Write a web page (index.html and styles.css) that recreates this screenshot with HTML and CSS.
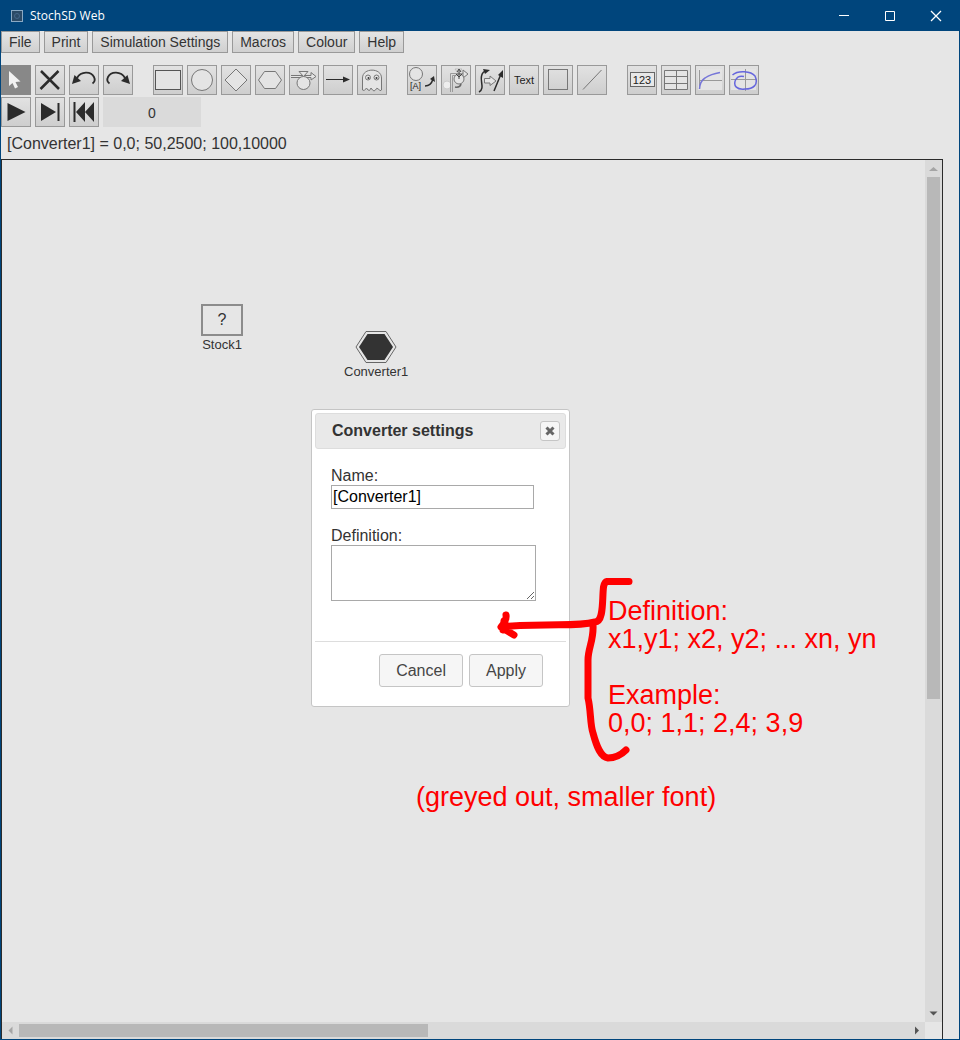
FILE: index.html
```html
<!DOCTYPE html>
<html lang="en">
<head>
<meta charset="utf-8">
<title>StochSD Web</title>
<link rel="stylesheet" href="styles.css">
</head>
<body>
<div class="window">
  <header class="titlebar">
    <svg class="app-icon" viewBox="0 0 12 12"><rect x=".5" y=".5" width="11" height="11" fill="#2b4a66" stroke="#8aa9c4"/><circle cx="6" cy="6" r="2.500" fill="none" stroke="#45678a"/></svg>
    <span class="app-name">StochSD Web</span>
    <div class="window-controls">
      <button class="window-button" aria-label="Minimise"><svg viewBox="0 0 12 12"><path d="M1 5.500H11"/></svg></button>
      <button class="window-button" aria-label="Maximise"><svg viewBox="0 0 12 12"><path d="M1.500 1.500H10.500V10.500H1.500Z"/></svg></button>
      <button class="window-button" aria-label="Close window"><svg viewBox="0 0 12 12"><path d="M1 1L11 11M11 1L1 11" stroke-width="1.300"/></svg></button>
    </div>
  </header>

  <nav class="menu">
    <button class="menu-button">File</button>
    <button class="menu-button">Print</button>
    <button class="menu-button">Simulation Settings</button>
    <button class="menu-button">Macros</button>
    <button class="menu-button">Colour</button>
    <button class="menu-button">Help</button>
  </nav>

  <div class="toolbar">
    <div class="tool-group">
      <button class="tool tool-active" aria-label="Select"><svg viewBox="0 0 28 28"><path d="M7 5V20L10.500 17L13 22.500L16 21L13.500 16L18.500 15.500Z" fill="#f2f2f2"/></svg></button>
      <button class="tool" aria-label="Delete"><svg viewBox="0 0 28 28"><path d="M5 5L23 23M22.500 5L4.500 23" fill="none" stroke="#2b2b2b" stroke-width="2.500"/></svg></button>
      <button class="tool" aria-label="Undo"><svg viewBox="0 0 28 28"><path d="M7 12C11 5 21 5 24 11C25.500 14 24.500 16 22.500 17.500" fill="none" stroke="#2b2b2b" stroke-width="1.800"/><path d="M2 18L4.500 9L11 15Z" fill="#2b2b2b"/></svg></button>
      <button class="tool" aria-label="Redo"><svg viewBox="0 0 28 28"><path d="M21 12C17 5 7 5 4 11C2.500 14 3.500 16 5.500 17.500" fill="none" stroke="#2b2b2b" stroke-width="1.800"/><path d="M26 18L23.500 9L17 15Z" fill="#2b2b2b"/></svg></button>
    </div>
    <div class="tool-group">
      <button class="tool" aria-label="Stock"><svg viewBox="0 0 28 28"><rect x="1.500" y="4.500" width="25" height="19" class="shape shape-dark"/></svg></button>
      <button class="tool" aria-label="Auxiliary"><svg viewBox="0 0 28 28"><circle cx="14" cy="14" r="10.500" class="shape"/></svg></button>
      <button class="tool" aria-label="Parameter"><svg viewBox="0 0 28 28"><path d="M14 3L25 14L14 25L3 14Z" class="shape"/></svg></button>
      <button class="tool" aria-label="Converter"><svg viewBox="0 0 28 28"><path d="M8.500 5.500H19.500L25.500 14L19.500 22.500H8.500L2.500 14Z" class="shape"/></svg></button>
      <button class="tool" aria-label="Flow"><svg viewBox="0 0 28 28"><path d="M1 9.500H21V6.500L26 10.500L21 14V11.500H1" class="shape"/><path d="M9 5.500H18L13.500 10.500Z" class="shape"/><circle cx="13.500" cy="17" r="6.500" class="shape"/></svg></button>
      <button class="tool" aria-label="Link"><svg viewBox="0 0 28 28"><path d="M2 13.500H20" stroke="#2b2b2b"/><path d="M19 10.500L26 13.500L19 16.500Z" fill="#2b2b2b"/></svg></button>
      <button class="tool" aria-label="Ghost"><svg viewBox="0 0 28 28"><path d="M4.500 24V12C4.500 1.500 23.500 1.500 23.500 12V24Q22 26 20.500 23Q18.500 21 17.500 24Q16 26 14.500 24L13 22Q11.500 26 10 24L8.500 22Q6 26 4.500 24Z" class="shape"/><circle cx="10" cy="11.500" r="2.500" class="shape"/><circle cx="18.500" cy="11.500" r="2.500" class="shape"/><circle cx="10.500" cy="12" r="1" fill="#333"/><circle cx="18.500" cy="12" r="1" fill="#333"/></svg></button>
    </div>
    <div class="tool-group">
      <button class="tool" aria-label="Move value"><svg viewBox="0 0 28 28"><circle cx="8" cy="8" r="6.500" class="shape"/><text x="2" y="23" class="tiny-text">[A]</text><path d="M17 20Q23 20 25 13" fill="none" stroke="#2b2b2b" stroke-width="1.500"/><path d="M22 13L26 10L27 16Z" fill="#2b2b2b"/></svg></button>
      <button class="tool" aria-label="Move valve"><svg viewBox="0 0 28 28"><circle cx="5" cy="19" r="4" fill="#eee" stroke="#ccc"/><path d="M8.500 26V7.500H22M10.500 26V9.500H22" fill="none" stroke="#999"/><path d="M21 4L26 8L21 12Z" class="shape"/><path d="M13 3H20L13 12H20Z" fill="#eee" stroke="#bbb"/><circle cx="17" cy="13" r="5" class="shape"/><path d="M17 4V13M15 6L17 3L19 6M14 8L17 11L20 8" fill="none" stroke="#444"/><path d="M19 18Q18 22 13 21" fill="none" stroke="#666" stroke-width="1.500"/></svg></button>
      <button class="tool" aria-label="Straighten link"><svg viewBox="0 0 28 28"><path d="M3 26C9 23 4 15 5.500 10Q6.500 5 11 5" fill="none" stroke="#2b2b2b" stroke-width="1.500"/><path d="M7 3L14 4L9 8Z" fill="#2b2b2b"/><path d="M8.500 12.500H14V10L20 15L14 19.500V17H8.500Z" class="shape"/><path d="M18 25L25 8" stroke="#2b2b2b" stroke-width="1.500"/><path d="M22 9L27 4V12Z" fill="#2b2b2b"/></svg></button>
      <button class="tool tool-text">Text</button>
      <button class="tool" aria-label="Rectangle"><svg viewBox="0 0 28 28"><rect x="4.500" y="3.500" width="19" height="20" fill="none" stroke="#777"/></svg></button>
      <button class="tool" aria-label="Line"><svg viewBox="0 0 28 28"><path d="M5 23.500L23.500 4" stroke="#777"/></svg></button>
    </div>
    <div class="tool-group">
      <button class="tool" aria-label="Number box"><svg viewBox="0 0 28 28"><rect x="2.500" y="6.500" width="24" height="14" fill="#e8e8e8" stroke="#666"/><text x="14" y="18" class="number-text">123</text></svg></button>
      <button class="tool" aria-label="Table"><svg viewBox="0 0 28 28"><path d="M2.500 4.500H25.500V23.500H2.500ZM2.500 10.500H25.500M2.500 17.500H25.500M14.500 4.500V23.500" class="shape"/></svg></button>
      <button class="tool" aria-label="Time plot"><svg viewBox="0 0 28 28"><path d="M2 3H26V24H2Z" fill="#e4e4e4"/><path d="M3.500 4V23M3 14.500H26" stroke="#999" fill="none"/><path d="M3.500 23Q4 15 9 12Q15 8 24 6.500" fill="none" stroke="#7676d8" stroke-width="1.500"/></svg></button>
      <button class="tool" aria-label="XY plot"><svg viewBox="0 0 28 28"><path d="M1 3H26V24H1Z" fill="#e4e4e4"/><path d="M15.500 3V25M1 13.500H27" stroke="#999" fill="none"/><path d="M2.500 9C8 4 21 5 25 10C29 19 23 23 15 23C7 24 3 20 5.500 14Q8 9 14 10.500" fill="none" stroke="#6666dd" stroke-width="1.500"/></svg></button>
    </div>
  </div>

  <div class="playbar">
    <button class="tool" aria-label="Run"><svg viewBox="0 0 28 28"><path d="M5.500 5L23.500 14L5.500 23Z" fill="#2b2b2b"/></svg></button>
    <button class="tool" aria-label="Step"><svg viewBox="0 0 28 28"><path d="M5 5L20 14L5 23Z" fill="#2b2b2b"/><path d="M22.500 5V23" stroke="#2b2b2b" stroke-width="2"/></svg></button>
    <button class="tool" aria-label="Reset"><svg viewBox="0 0 28 28"><path d="M4.500 4V24" stroke="#2b2b2b" stroke-width="2"/><path d="M15 4V24L6 14ZM24 4V24L15 14Z" fill="#2b2b2b"/></svg></button>
    <output class="time-readout">0</output>
  </div>

  <p class="status">[Converter1] = 0,0; 50,2500; 100,10000</p>

  <main class="stage">
    <div class="pane">
      <div class="node node-stock">
        <div class="stock-box">?</div>
        <span class="node-label">Stock1</span>
      </div>
      <div class="node node-converter">
        <svg class="converter-shape" viewBox="0 0 42 32"><path d="M11 .5H31L41 16L31 31.500H11L1 16Z" fill="#e6e6e6" stroke="#666"/><path d="M12.500 3H29.500L38 16L29.500 29H12.500L4 16Z" fill="#333"/></svg>
        <span class="node-label">Converter1</span>
      </div>

      <form class="dialog" role="dialog" aria-labelledby="dialog-title">
        <div class="dialog-header">
          <h2 class="dialog-title" id="dialog-title">Converter settings</h2>
          <button type="button" class="dialog-close" aria-label="Close"><svg viewBox="0 0 10 10"><path d="M1.500 1.500L8.500 8.500M8.500 1.500L1.500 8.500" stroke="#666" stroke-width="3"/></svg></button>
        </div>
        <div class="dialog-body">
          <label class="field-label" for="name">Name:</label>
          <input class="name-field" id="name" type="text" value="[Converter1]">
          <label class="field-label" for="definition">Definition:</label>
          <textarea class="definition-field" id="definition"></textarea>
        </div>
        <div class="dialog-actions">
          <button type="button" class="dialog-button">Cancel</button>
          <button type="button" class="dialog-button">Apply</button>
        </div>
      </form>

      <svg class="brace" viewBox="495 575 140 190"><path d="M629 581.500H607Q604.500 582 603.500 587C602 600 604 622 595 622C575 627 560 623 503 626.500M506 615Q507 620 501 627L514 635M504 621L503 630M593 625C594 640 588 648 588 660V698C591 710 590 725 593 733C597 748 601 757 608 758Q618 758 626 750"/></svg>
      <p class="note note-format">Definition:<br>x1,y1; x2, y2; ... xn, yn<br><br>Example:<br>0,0; 1,1; 2,4; 3,9</p>
      <p class="note note-hint">(greyed out, smaller font)</p>
    </div>
    <div class="scrollbar scrollbar-vertical">
      <svg class="scroll-arrow" viewBox="0 0 17 17"><path d="M4 11L8.500 7L13 11Z" fill="#a5a5a5"/></svg>
      <div class="scroll-track"><div class="scroll-thumb"></div></div>
      <svg class="scroll-arrow" viewBox="0 0 17 17"><path d="M4.500 6.500L8.500 10.500L12.500 6.500Z" fill="#555"/></svg>
    </div>
    <div class="scrollbar scrollbar-horizontal">
      <svg class="scroll-arrow" viewBox="0 0 17 17"><path d="M10.500 4.500L6.500 8.500L10.500 12.500Z" fill="#a5a5a5"/></svg>
      <div class="scroll-track"><div class="scroll-thumb"></div></div>
      <svg class="scroll-arrow" viewBox="0 0 17 17"><path d="M7 4.500L11 8.500L7 12.500Z" fill="#555"/></svg>
    </div>
    <div class="scroll-corner"></div>
  </main>
</div>
</body>
</html>
```

FILE: styles.css
```css
* {
  box-sizing: border-box;
}

body {
  margin: 0;
  background: #e6e6e6;
  color: #333;
  font-family: "Liberation Sans", Arial, sans-serif;
}

button,
input,
textarea {
  margin: 0;
  font-family: inherit;
}

.window {
  display: flex;
  flex-direction: column;
  min-height: 100vh;
  border: 1px solid #00457c;
  border-top: 0;
}

.titlebar {
  display: flex;
  align-items: center;
  height: 31px;
  padding-left: 10px;
  background: #00457c;
  color: #fff;
}

.app-icon {
  width: 12px;
  height: 12px;
}

.app-name {
  margin-left: 7px;
  font: 12px/16px "Open Sans", sans-serif;
}

.window-controls {
  display: flex;
  margin-left: auto;
}

.window-button {
  display: flex;
  align-items: center;
  justify-content: center;
  width: 46px;
  height: 31px;
  padding: 0;
  border: 0;
  background: none;
}

.window-button svg {
  width: 12px;
  height: 12px;
  fill: none;
  stroke: #fff;
}

.menu {
  display: flex;
  gap: 4px;
}

.menu-button {
  height: 22px;
  padding: 0 7px;
  border: 1px solid #999;
  background: linear-gradient(#e4e4e4, #d0d0d0);
  color: #333;
  font-size: 14px;
  line-height: 20px;
}

.toolbar {
  display: flex;
  flex-wrap: wrap;
  gap: 20px;
  margin-top: 12px;
}

.tool-group,
.playbar {
  display: flex;
  gap: 4px;
}

.playbar {
  margin-top: 2px;
}

.tool {
  width: 30px;
  height: 30px;
  padding: 0;
  border: 1px solid #999;
  background: linear-gradient(#e2e2e2, #cecece);
  color: #333;
}

.tool svg {
  display: block;
  width: 28px;
  height: 28px;
}

.tool-active {
  border-color: #888;
  background: #888;
}

.tool-text {
  color: #222;
  font-size: 11px;
}

.shape {
  fill: #e4e4e4;
  stroke: #777;
}

.shape-dark {
  stroke: #555;
}

.tiny-text {
  fill: #222;
  font-size: 9px;
}

.number-text {
  fill: #222;
  font-size: 11px;
  text-anchor: middle;
}

.time-readout {
  width: 98px;
  background: #dadada;
  font-size: 14px;
  line-height: 32px;
  text-align: center;
}

.playbar {
  height: 30px;
}

.status {
  margin: 8px 6px 6px;
  font-size: 16px;
  line-height: 18px;
}

.stage {
  display: grid;
  flex: 1;
  grid-template-columns: 1fr 17px;
  grid-template-rows: 1fr 17px;
  margin-right: 16px;
  border: 1px solid #2b2b2b;
  border-bottom: 0;
}

.pane {
  position: relative;
  min-height: 660px;
}

.node {
  position: absolute;
  display: flex;
  flex-direction: column;
  align-items: center;
}

.node-stock {
  left: 199px;
  top: 144px;
}

.node-converter {
  left: 342px;
  top: 171px;
}

.stock-box {
  width: 42px;
  height: 32px;
  border: 2px solid #8c8c8c;
  font-size: 16px;
  line-height: 28px;
  text-align: center;
}

.converter-shape {
  width: 42px;
  height: 32px;
}

.node-label {
  font-size: 13px;
  line-height: 18px;
}

.dialog {
  position: absolute;
  left: 309px;
  top: 249px;
  width: 259px;
  padding: 3px;
  border: 1px solid #c5c5c5;
  border-radius: 3px;
  background: #fff;
}

.dialog-header {
  display: flex;
  align-items: center;
  justify-content: space-between;
  height: 36px;
  padding: 0 5px 0 16px;
  border: 1px solid #ddd;
  border-radius: 3px;
  background: #e9e9e9;
}

.dialog-title {
  margin: 0;
  font-size: 16px;
  line-height: 20px;
}

.dialog-close {
  display: flex;
  align-items: center;
  justify-content: center;
  width: 20px;
  height: 20px;
  padding: 0;
  border: 1px solid #c5c5c5;
  border-radius: 3px;
  background: #f6f6f6;
}

.dialog-close svg {
  width: 10px;
  height: 10px;
}

.dialog-body {
  display: flex;
  flex-direction: column;
  align-items: flex-start;
  padding: 18px 16px 40px;
}

.field-label {
  font-size: 16px;
  line-height: 18px;
}

.name-field,
.definition-field {
  border: 1px solid #a9a9a9;
  background: #fff;
  color: #000;
  font-size: 16px;
}

.name-field {
  width: 203px;
  height: 24px;
  margin-bottom: 18px;
  padding: 1px;
}

.definition-field {
  width: 205px;
  height: 56px;
  padding: 2px;
}

.dialog-actions {
  display: flex;
  gap: 6px;
  justify-content: flex-end;
  padding: 12px 23px 16px 0;
  border-top: 1px solid #ddd;
}

.dialog-button {
  height: 33px;
  padding: 0 16px;
  border: 1px solid #c5c5c5;
  border-radius: 3px;
  background: #f6f6f6;
  color: #454545;
  font-size: 16px;
}

.brace {
  position: absolute;
  left: 493px;
  top: 415px;
  width: 140px;
  height: 190px;
  overflow: visible;
  fill: none;
  stroke: #f00;
  stroke-width: 7;
  stroke-linecap: round;
  stroke-linejoin: round;
}

.note {
  position: absolute;
  margin: 0;
  color: #f00;
  font-size: 27px;
  line-height: 28px;
  white-space: nowrap;
}

.note-format {
  left: 606px;
  top: 437px;
}

.note-hint {
  left: 414px;
  top: 623px;
}

.scrollbar {
  display: flex;
  background: #dadada;
}

.scrollbar-vertical {
  flex-direction: column;
}

.scroll-arrow {
  flex: none;
  width: 17px;
  height: 17px;
}

.scroll-track {
  flex: 1;
}

.scroll-thumb {
  background: #b8b8b8;
}

.scrollbar-vertical .scroll-thumb {
  width: 13px;
  height: 63%;
  margin: 0 2px;
}

.scrollbar-horizontal {
  align-items: center;
}

.scrollbar-horizontal .scroll-thumb {
  width: 46%;
  height: 13px;
}

.scroll-corner {
  background: #e6e6e6;
}
```
